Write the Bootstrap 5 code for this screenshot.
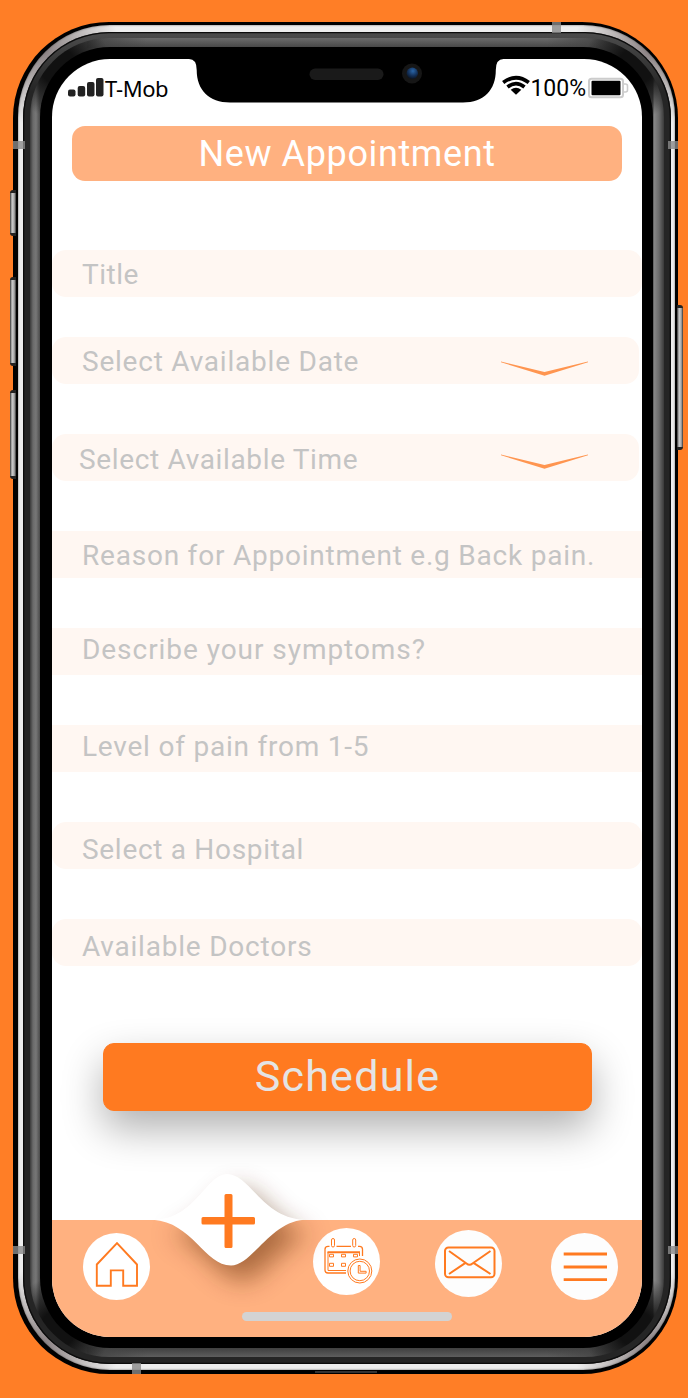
<!DOCTYPE html>
<html lang="en">
<head>
<meta charset="utf-8">
<meta name="viewport" content="width=device-width, initial-scale=1">
<title>New Appointment</title>
<link href="https://cdn.jsdelivr.net/npm/bootstrap@5.3.0/dist/css/bootstrap.min.css" rel="stylesheet">
<style>
body{background:#ff7e26;font-family:Roboto,"Liberation Sans",sans-serif;color:#000}
.stage{width:688px;height:1398px;padding:22px 10px 24px 13px}
/* phone frame, ring by ring from the outside in */
.rim-outer{background:#000;border-radius:96px;padding:3px 3px 4px 5px;height:1352px}
.rim-steel{border-radius:92px;padding:7px 4px 6px 5px;
 background:radial-gradient(circle at 27px 27px,#8d8486 0,#aaa4a4 25px,transparent 75px),radial-gradient(circle at 630px 27px,#8d8486 0,#aaa4a4 25px,transparent 75px),radial-gradient(circle at 27px 1318px,#8d8486 0,#aaa4a4 25px,transparent 75px),radial-gradient(circle at 630px 1318px,#8d8486 0,#aaa4a4 25px,transparent 75px),#eee;
 box-shadow:inset 0 0 2px #555}
.rim-dark{background:linear-gradient(#4c4c4c,#252525 60px,#252525);border-radius:86px;padding:6px 7px 7px;box-shadow:inset 0 0 0 1.3px #0c0c0c}
.rim-grey{border-radius:79px;padding:9px 11px 9px 10px;
 background:radial-gradient(circle at 28px 28px,#111 18px,transparent 52px),radial-gradient(circle at 606px 28px,#111 18px,transparent 52px),radial-gradient(circle at 28px 1291px,#111 18px,transparent 52px),radial-gradient(circle at 606px 1291px,#111 18px,transparent 52px),
 linear-gradient(90deg,#444,#4440 60px,#4440 calc(100% - 60px),#444) center top/520px 10px no-repeat,linear-gradient(90deg,#444,#4440 60px,#4440 calc(100% - 60px),#444) center bottom/520px 10px no-repeat,
 linear-gradient(#6b6b6b,#444) center top/520px 10px no-repeat,linear-gradient(#3c3c3c,#5e5e5e) center bottom/520px 10px no-repeat,
 linear-gradient(90deg,#3a3a3a,#6a6a6a 3px,#777 6px,#4a4a4a 10px,#444 50%,#444 623px,#888 624px,#6c6c6c 629px,#3a3a3a)}
.rim-black{background:#000;border-radius:70px;padding:12px 11px 11px 12px}
.screen{background:#fff;border-radius:58px;height:1278px}
.side-key{position:absolute;width:6px;border-radius:3px 0 0 3px;background:linear-gradient(90deg,#333,#ccc 35%,#aaa 70%,#333);border:solid #222;border-width:3px 0}
.side-key.on-right{border-radius:0 3px 3px 0}
.antenna{position:absolute;background:#8a8a8acc}
.notch{position:absolute;left:137px;top:-1px}
.status{height:67px;padding:13px 13px 0 16px;font-size:23px;line-height:34px}
.carrier{font-family:"Noto Sans",sans-serif;font-size:22px;letter-spacing:-.4px;line-height:32px}
.title-bar{height:55px;margin:0 20px;border-radius:13px;background:#ffb180;color:#fff;font-size:36px;line-height:57px;letter-spacing:.62px}
.form-stack{padding-top:69px}
.field{height:47px;margin-bottom:50px;background:#fff7f2;color:#c4c4c4;font-size:28px;line-height:49px;padding-left:30px;letter-spacing:.78px;white-space:nowrap}
.field.soft{border-radius:14px}
.btn-schedule{--bs-btn-color:#e4e4e4;--bs-btn-bg:#ff7a20;--bs-btn-border-color:#ff7a20;width:489px;height:68px;margin:77px 0 0 51px;border-radius:11px;font-size:43px;line-height:1;letter-spacing:1.25px;padding:0 0 1px;box-shadow:0 18px 40px rgba(0,0,0,.31)}
.tabs{height:117px;margin-top:109px;background:#ffb180;border-radius:0 0 58px 58px}
.tab{width:67px;height:67px;border-radius:50%;background:#fff;padding:0;border:0;flex:none}
.tab svg,.chev,.notch,.fab svg{display:block}
.fab{position:absolute;left:50px;top:-100px;padding:0;border:0;background:none}
.home-bar{position:absolute;left:190px;top:92px;width:210px;height:9px;border-radius:5px;background:#d3d3d3}
</style>
</head>
<body>
<div class="stage position-relative overflow-hidden">
 <i class="side-key" style="left:10px;top:190px;height:46px"></i>
 <i class="side-key" style="left:10px;top:277px;height:89px"></i>
 <i class="side-key" style="left:10px;top:390px;height:89px"></i>
 <i class="side-key on-right" style="left:677px;top:305px;height:145px"></i>
 <div class="rim-outer"><div class="rim-steel"><div class="rim-dark"><div class="rim-grey"><div class="rim-black">
 <main class="screen position-relative">
  <svg class="notch" width="316" height="46" viewBox="189 58 316 46">
   <defs><radialGradient id="lens" cx=".55" cy=".3" r=".7"><stop offset="0" stop-color="#2a66a8"/><stop offset=".55" stop-color="#15345f"/><stop offset="1" stop-color="#0a1322"/></radialGradient></defs>
   <path d="M189 58V59Q196.7 59 196.7 70C196.7 90 209 102.5 230 102.5H463C484 102.5 495.8 90 495.8 70Q495.8 59 503.500 59V58Z"/>
   <rect x="309.500" y="68.500" width="74" height="11.500" rx="5.700" fill="#1a1a1a"/>
   <circle cx="412" cy="73.500" r="10" fill="#161616"/><circle cx="412.300" cy="73.300" r="5.700" fill="url(#lens)"/>
  </svg>
  <div class="status d-flex justify-content-between">
   <div class="d-flex">
    <svg width="37" height="34" viewBox="0 0 37 34" fill="#222"><rect x="0" y="17.500" width="7.500" height="7" rx="2"/><rect x="9.700" y="14" width="7.500" height="10.500" rx="2"/><rect x="19" y="10" width="7.500" height="14.500" rx="2"/><rect x="28" y="6" width="7.500" height="18.500" rx="2"/></svg>
    <span class="carrier">T-Mob</span>
   </div>
   <div class="d-flex">
    <svg width="28" height="34" viewBox="0 0 28 34"><g fill="none" stroke="#000" stroke-width="3.700"><path d="M1.200 10.500Q14 1 26.800 10.500"/><path d="M5.500 15Q14 8.200 22.500 15"/></g><path d="M8.700 17.800Q14 13.700 19.300 17.800L14 22.800Z"/></svg>
    <span class="percent">100%</span>
    <svg width="41" height="34" viewBox="0 0 41 34" style="margin-left:2px"><rect x="1" y="6.800" width="34" height="18.500" rx="2.500" fill="none" stroke="#ccc" stroke-width="2"/><path d="M35 12h2.500q2 0 2 2v4q0 2-2 2H35" fill="none" stroke="#ccc" stroke-width="1.600"/><rect x="3.500" y="8.800" width="29" height="14.500" rx="1"/></svg>
   </div>
  </div>
  <h1 class="title-bar text-center fw-normal"><span>New Appointment</span></h1>
  <div class="form-stack">
   <div class="field soft" style="margin-bottom:40px;letter-spacing:.5px"><span>Title</span></div>
   <div class="field soft d-flex" style="margin-right:3px"><span>Select Available Date</span></div>
   <div class="field soft d-flex" style="margin-right:3px;padding-left:27px;line-height:52px;letter-spacing:.65px"><span>Select Available Time</span></div>
   <div class="field"><span>Reason for Appointment e.g Back pain.</span></div>
   <div class="field" style="line-height:44px;letter-spacing:.95px"><span>Describe your symptoms?</span></div>
   <div class="field" style="line-height:44px"><span>Level of pain from 1-5</span></div>
   <div class="field soft" style="line-height:55px;letter-spacing:.7px"><span>Select a Hospital</span></div>
   <div class="field soft mb-0" style="line-height:55px"><span>Available Doctors</span></div>
  </div>
  <button class="btn btn-schedule d-block" type="button"><span>Schedule</span></button>
  <nav class="tabs position-relative d-flex align-items-start">
   <button class="tab" style="margin:13px 0 0 31px" aria-label="Home"><svg width="67" height="67" viewBox="83 1233 67 67" fill="none" stroke="#ff7a20" stroke-width="1.900"><path d="M117 1243.200 96.800 1264.500V1285.700H110.800V1270.400H123.200V1285.700H137V1264.500Z"/></svg></button>
   <button class="fab" aria-label="Add"><svg width="250" height="220" viewBox="102 1120 250 220">
    <defs><filter id="glow" x="-60%" y="-60%" width="220%" height="240%"><feGaussianBlur stdDeviation="13"/></filter></defs>
    <path transform="translate(12 15)" opacity=".5" filter="url(#glow)" fill="#5a2600" d="M153 1219.700C195 1220 206 1174 227 1174C250 1174 262 1218 304 1219.700C270 1222 252 1265.500 231 1265.500C205 1265.500 192 1222 153 1219.700Z"/>
    <path fill="#fff" d="M153 1219.700C195 1220 206 1174 227 1174C250 1174 262 1218 304 1219.700C270 1222 252 1265.500 231 1265.500C205 1265.500 192 1222 153 1219.700Z"/>
    <path fill="#ff7a20" d="M226 1194h5q1.500 0 1.500 1.500V1217H253.500q1.500 0 1.500 1.500v4.500q0 1.500-1.500 1.500H232.500v22q0 1.500-1.500 1.500h-5q-1.500 0-1.500-1.500v-22H203q-1.500 0-1.500-1.500v-4.500q0-1.500 1.500-1.500h21.500v-21.500q0-1.500 1.500-1.500Z"/></svg></button>
   <button class="tab" style="margin:8px 0 0 163px" aria-label="Calendar"><svg width="67" height="67" viewBox="313 1228 67 67" fill="none" stroke="#ff7a20" stroke-width="1">
    <path stroke-width="1.300" d="M329.500 1246.300H328Q325 1246.300 325 1249.300V1270Q325 1273 328 1273H346M336.500 1246.300H351M358 1246.300H359.500Q362.500 1246.300 362.500 1249.300V1256"/>
    <path stroke-width="2" d="M327.500 1252.300H360"/><path d="M328 1252V1270.500H346M359.500 1252V1256"/>
    <rect x="331.500" y="1238.500" width="3" height="8.500" rx="1.500"/><rect x="352.700" y="1238.500" width="3" height="8.500" rx="1.500"/>
    <path d="M329.500 1254.300h4v2.600h-4ZM341.500 1254.300h4v2.600h-4ZM353.500 1254.300h4v2.600h-4ZM329.500 1263.300h4v3h-4ZM341.500 1263.300h4v3h-4Z"/>
    <circle cx="359.800" cy="1271" r="13.500" fill="#fff" stroke="none"/><circle cx="359.800" cy="1271" r="12"/><circle cx="359.800" cy="1271" r="9.700"/>
    <path d="M358.300 1265.500h1.800v5.800h6v1.800h-7.800Z"/></svg></button>
   <button class="tab" style="margin:10px 0 0 55px;background:#fdfdfd" aria-label="Messages"><svg width="67" height="67" viewBox="435 1230 67 67" fill="none" stroke="#ff7a20" stroke-width="2"><rect x="445" y="1247.500" width="49.500" height="29.800" rx="3.500"/><path d="M449 1251 466.500 1263.500Q469.500 1266 472.500 1263.500L490.500 1251M449 1274 465.500 1262.800M490.500 1274 473.500 1262.800"/></svg></button>
   <button class="tab" style="margin:13px 0 0 49px;background:#fdfdfd" aria-label="Menu"><svg width="67" height="67" viewBox="551 1233 67 67"><path stroke="#ff7a20" stroke-width="2.800" d="M563.700 1254H607M563.700 1267H607M563.700 1279.600H607"/></svg></button>
   <i class="home-bar"></i>
  </nav>
  <svg class="chev position-absolute" style="left:448px;top:302px" width="89" height="16" viewBox="0 0 89 16" fill="#ff9550"><path d="M1 .5 44.500 11 88 .5 88 1.300 44.500 14.700 1 1.300Z"/></svg>
  <svg class="chev position-absolute" style="left:448px;top:394.500px" width="89" height="16" viewBox="0 0 89 16" fill="#ff9550"><path d="M1 .5 44.500 11 88 .5 88 1.300 44.500 14.700 1 1.300Z"/></svg>
 </main>
 </div></div></div></div></div>
 <i class="antenna" style="left:552px;top:22px;width:9px;height:11px"></i>
 <i class="antenna" style="left:132px;top:1363px;width:9px;height:11px"></i>
 <i class="antenna" style="left:13px;top:141px;width:12px;height:8px"></i>
 <i class="antenna" style="left:668px;top:141px;width:10px;height:8px"></i>
 <i class="antenna" style="left:13px;top:1246px;width:12px;height:8px"></i>
 <i class="antenna" style="left:668px;top:1246px;width:10px;height:8px"></i>
 <i class="antenna" style="left:315px;top:1371px;width:62px;height:2px;background:#333"></i>
</div>
<script src="https://cdn.jsdelivr.net/npm/bootstrap@5.3.0/dist/js/bootstrap.bundle.min.js"></script>
</body>
</html>
